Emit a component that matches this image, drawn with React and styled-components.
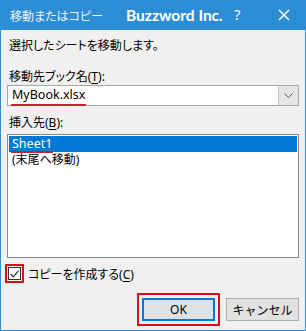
import styled, { createGlobalStyle } from "styled-components"

const Global = createGlobalStyle`
    body {
        margin: 0;
        background: #fff;
        font-family: "Noto Sans", "Noto Sans CJK JP", sans-serif;
    }
`

const Window = styled.div`
    width: 306px;
    height: 331px;
    box-sizing: border-box;
    display: flex;
    flex-direction: column;
    background: #f0f0f0;
    border: 1px solid #2c8cd4;
    border-top: none;
`
const TitleBar = styled.div`
    height: 30px;
    flex: none;
    margin: 0 -1px;
    padding-left: 10px;
    display: flex;
    align-items: center;
    background: #2c8cd4;
    color: #fff;
`
const Title = styled.div`
    flex: none;
    width: 116px;
    font-size: 12px;
    font-family: "Noto Sans CJK JP", sans-serif;
    font-feature-settings: "palt";
    color: #eef5fb;
    white-space: nowrap;
`
const Brand = styled.div`
    flex: none;
    width: 107px;
    font-family: Lato, sans-serif;
    font-weight: 700;
    font-size: 15.5px;
    white-space: nowrap;
`
const Help = styled.div`
    flex: none;
    width: 43px;
    font-family: "Noto Sans", sans-serif;
    font-size: 15px;
    line-height: 20px;
    margin-top: -3px;
    padding-left: 1px;
`
const CloseButton = styled.div`
    flex: none;
    width: 14px;
    height: 14px;
    display: flex;
    align-items: center;
    justify-content: center;
    color: #ffffff;
`
const Body = styled.div`
    flex: 1;
    display: flex;
    flex-direction: column;
    padding: 8px 6px 0 6px;
    font-size: 12px;
    color: #000;
    font-feature-settings: "palt";
`
const Text = styled.div`
    line-height: 16px;
    height: 16px;
    padding-left: 2px;
    margin-top: ${p => p.$top || 0}px;
    white-space: nowrap;
`
const Key = styled.span`
    text-decoration: underline;
    text-underline-offset: 2px;
`
const Mark = styled.span`
    position: relative;
    &::after {
        content: "";
        position: absolute;
        left: -1px;
        right: -1px;
        bottom: ${p => p.$bottom ?? -3}px;
        height: 2px;
        background: #c8232c;
    }
`
const Combo = styled.div`
    height: 21px;
    box-sizing: border-box;
    display: flex;
    border: 1px solid #a6a6a6;
    background: #fff;
`
const ComboValue = styled.div`
    flex: 1;
    padding-left: 4px;
    line-height: 18px;
    font-size: 12.5px;
`
const ComboButton = styled.div`
    width: 19px;
    display: flex;
    align-items: center;
    justify-content: center;
    background: #e5e5e5;
    border-left: 1px solid #c4c4c4;
`
const List = styled.div`
    height: 124px;
    box-sizing: border-box;
    margin-top: 3px;
    padding: 1px;
    border: 1px solid #828790;
    background: #fff;
`
const Item = styled.div`
    height: 16px;
    line-height: 16px;
    padding-left: 3px;
    background: ${p => (p.$selected ? "#0078d7" : "transparent")};
    color: ${p => (p.$selected ? "#fff" : "#000")};
    font-size: ${p => (p.$latin ? "12.5px" : "12px")};
`
const CheckRow = styled.label`
    display: flex;
    align-items: center;
    gap: 7px;
    height: 21px;
    margin-top: 5px;
    padding-left: 1px;
`
const Box = styled.span`
    position: relative;
    width: 13px;
    height: 13px;
    box-sizing: border-box;
    border: 1px solid #333;
    background: #fff;
    display: flex;
    align-items: center;
    justify-content: center;
    &::after {
        content: "";
        position: absolute;
        inset: -4px;
        border: 2px solid #d5121b;
    }
`
const Buttons = styled.div`
    display: flex;
    justify-content: flex-end;
    gap: 11px;
    margin-top: 14px;
`
const Button = styled.button`
    position: relative;
    width: 73px;
    height: 23px;
    box-sizing: border-box;
    padding: 0;
    background: #e1e1e1;
    border: ${p => (p.$default ? "2px solid #0078d7" : "1px solid #adadad")};
    font-family: "Noto Sans", "Noto Sans CJK JP", sans-serif;
    font-size: 12px;
    color: #000;
    &::after {
        content: "";
        display: ${p => (p.$marked ? "block" : "none")};
        position: absolute;
        inset: -7px;
        border: 2px solid #d5121b;
    }
`

const App = () => {
    return (
        <>
        <Global />
        <Window>
            <TitleBar>
                <Title>移動またはコピー</Title>
                <Brand>Buzzword Inc.</Brand>
                <Help>?</Help>
                <CloseButton>
                    <svg width="12" height="12" viewBox="0 0 12 12">
                        <line x1="1" y1="1" x2="11" y2="11" stroke="currentColor" strokeWidth="1.4" />
                        <line x1="11" y1="1" x2="1" y2="11" stroke="currentColor" strokeWidth="1.4" />
                    </svg>
                </CloseButton>
            </TitleBar>
            <Body>
                <Text>選択したシートを移動します。</Text>
                <Text $top={15}>移動先ブック名(<Key>T</Key>):</Text>
                <Combo>
                    <ComboValue><Mark>MyBook.xlsx</Mark></ComboValue>
                    <ComboButton>
                        <svg width="9" height="5" viewBox="0 0 9 5">
                            <path d="M0.5 0.5L4.5 4.5L8.5 0.5" fill="none" stroke="#555" strokeWidth="1" />
                        </svg>
                    </ComboButton>
                </Combo>
                <Text $top={9}>挿入先(<Key>B</Key>):</Text>
                <List>
                    <Item $selected $latin><Mark $bottom={-1}>Sheet1</Mark></Item>
                    <Item>(末尾へ移動)</Item>
                </List>
                <CheckRow>
                    <Box>
                        <svg width="9" height="8" viewBox="0 0 9 8">
                            <path d="M0.5 4L3.3 6.8L8.5 0.8" fill="none" stroke="#333" strokeWidth="1.2" />
                        </svg>
                    </Box>
                    <span>コピーを作成する(<Key>C</Key>)</span>
                </CheckRow>
                <Buttons>
                    <Button $default $marked>OK</Button>
                    <Button>キャンセル</Button>
                </Buttons>
            </Body>
        </Window>
        </>
    )
}

export default App
